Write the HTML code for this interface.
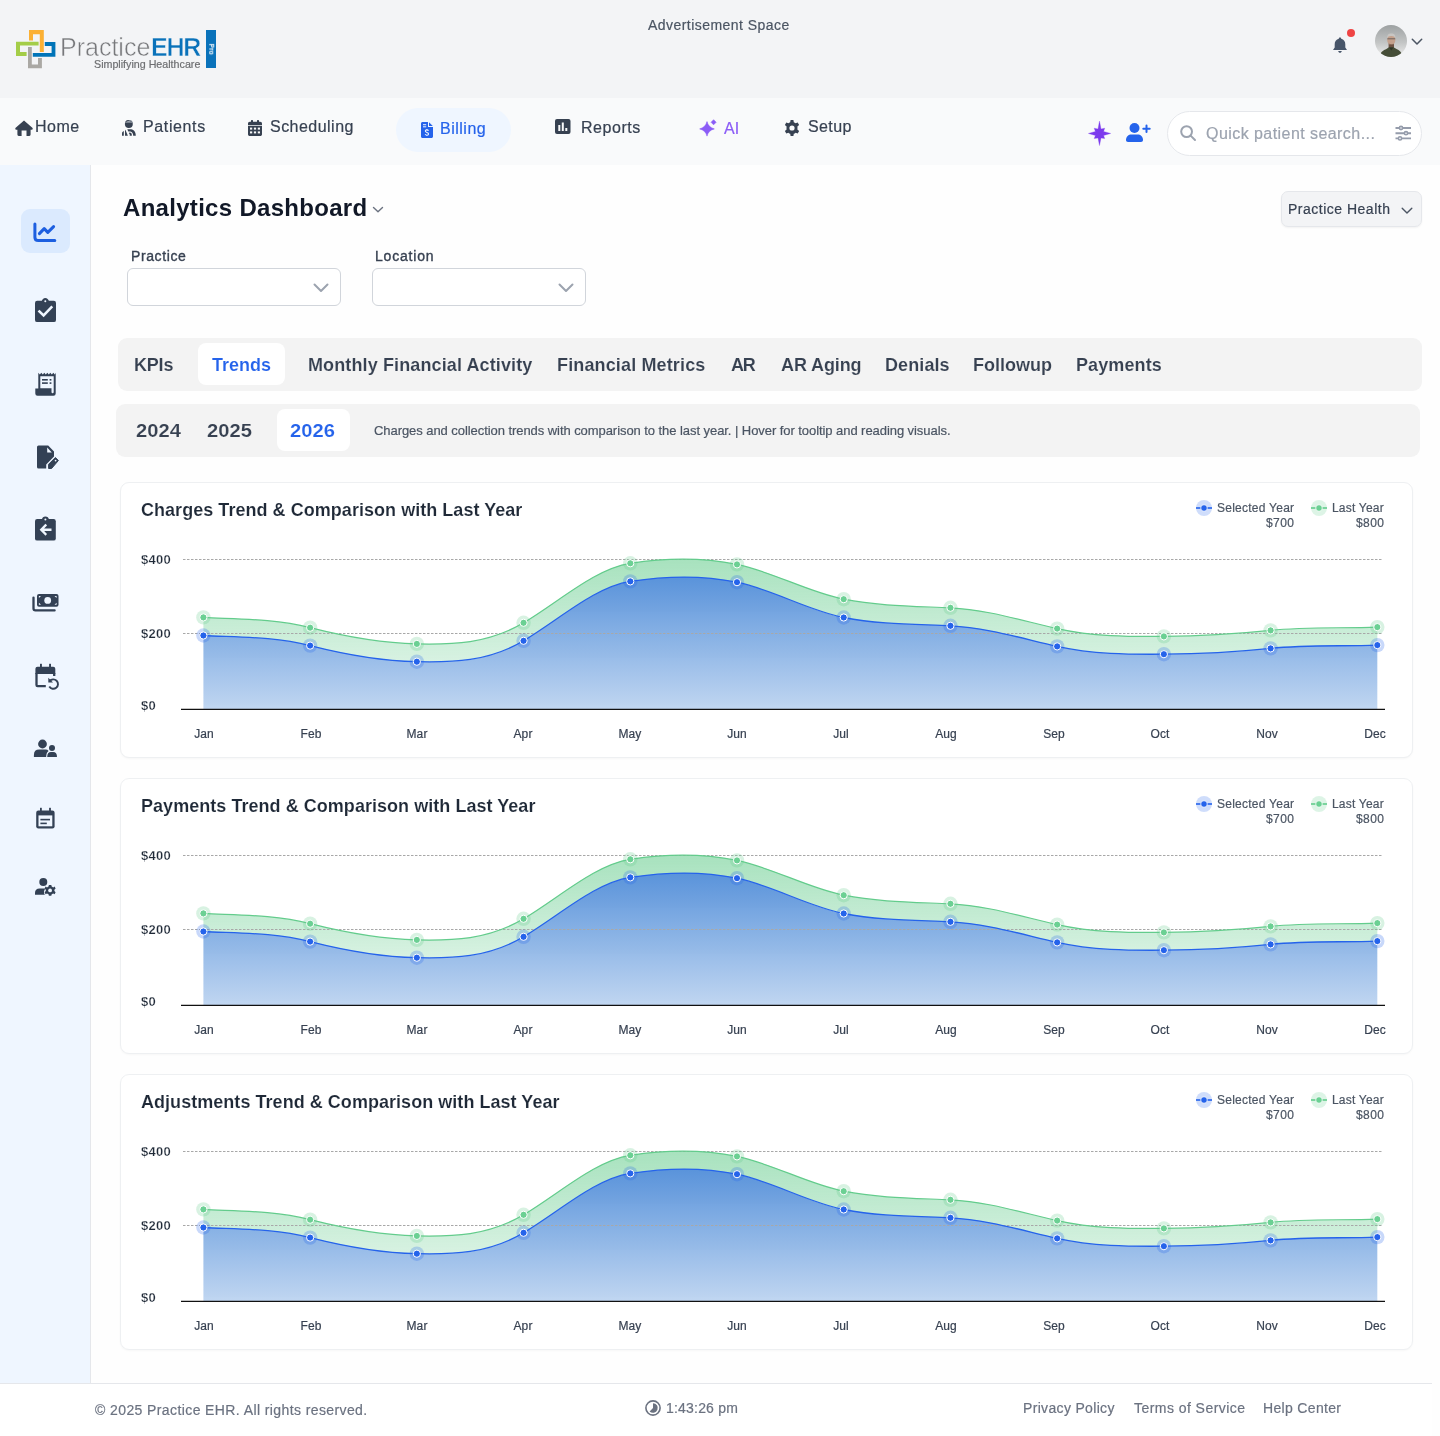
<!DOCTYPE html>
<html><head><meta charset="utf-8"><title>Analytics Dashboard</title>
<style>
html,body{margin:0;padding:0;}
body{width:1440px;height:1436px;position:relative;overflow:hidden;background:#fefefe;font-family:"Liberation Sans",sans-serif;}
.t{position:absolute;line-height:1;white-space:nowrap;will-change:transform;}
.r{position:absolute;}
svg.r{overflow:visible;}
</style></head><body>
<div class="r" style="left:0px;top:0px;width:1440px;height:98px;background:#f3f4f6"></div>
<div class="r" style="left:0px;top:98px;width:1440px;height:67px;background:#f9fafb"></div>
<div class="r" style="left:0px;top:165px;width:90px;height:1218px;background:#eff6ff;border-right:1px solid #e5e7eb"></div>
<div class="r" style="left:0px;top:1383px;width:1432px;height:53px;background:#ffffff;border-top:1px solid #e5e7eb;box-sizing:border-box"></div>
<div class="t" style="left:648.00px;top:18.15px;font-size:14px;color:#4b5563;font-weight:400;letter-spacing:0.45px;-webkit-text-stroke-width:0.2px;">Advertisement Space</div>
<svg class="r" style="left:0px;top:0px" width="60" height="72" viewBox="0 0 60 72">
<polygon fill="#fbb034" points="29,30 43.8,30 43.8,51.9 39.8,51.9 39.8,34.2 33,34.2 33,40.6 29,40.6"/>
<polygon fill="#a4cd48" points="16,41.8 38.6,41.8 38.6,45.6 20,45.6 20,51.9 26.6,51.9 26.6,55.9 16,55.9"/>
<polygon fill="#0074b8" points="44.8,42.1 55.4,42.1 55.4,56.7 32.8,56.7 32.8,52.9 51.6,52.9 51.6,46 44.8,46"/>
<polygon fill="#aaa8a4" points="28,47 31.8,47 31.8,64.5 38,64.5 38,58.1 41.9,58.1 41.9,68.2 28,68.2"/>
</svg>
<div class="t" style="left:59.50px;top:34.93px;font-size:25px;color:#77787b;font-weight:400;letter-spacing:0px;-webkit-text-stroke:0.5px #f3f4f6;">Practice</div>
<div class="t" style="left:151.30px;top:34.93px;font-size:25px;color:#0a72ba;font-weight:700;letter-spacing:-1.2px;-webkit-text-stroke:0.5px #f3f4f6;">EHR</div>
<div class="t" style="left:93.80px;top:59.24px;font-size:10.7px;color:#6d6e71;font-weight:400;letter-spacing:0px;-webkit-text-stroke-width:0.2px;">Simplifying Healthcare</div>
<div class="r" style="left:206px;top:30px;width:10px;height:38px;background:#0a72ba"></div>
<div class="t" style="left:203px;top:46px;width:16px;text-align:center;font-size:6.5px;color:#fff;font-weight:700;transform:rotate(90deg);">Pro</div>
<svg class="r" style="left:1333px;top:37px" width="14" height="16" viewBox="0 0 14 16"><path fill="#475569" d="M7,0.5 C7.8,0.5 8.2,1 8.2,1.8 C10.8,2.4 12.3,4.6 12.3,7.2 L12.3,10.4 L14,12.9 L0,12.9 L1.7,10.4 L1.7,7.2 C1.7,4.6 3.2,2.4 5.8,1.8 C5.8,1 6.2,0.5 7,0.5 Z M5.2,14 L8.8,14 C8.6,15.2 7.9,15.8 7,15.8 C6.1,15.8 5.4,15.2 5.2,14 Z"/></svg>
<svg class="r" style="left:1347px;top:29px" width="8" height="8" viewBox="0 0 8 8"><circle cx="4" cy="4" r="4" fill="#ef4444"/></svg>
<svg class="r" style="left:1375px;top:25px" width="32" height="32" viewBox="0 0 32 32"><defs><linearGradient id="avl" x1="0" y1="0" x2="0" y2="1"><stop offset="0" stop-color="#9da1a2"/><stop offset="0.55" stop-color="#c3c5c5"/><stop offset="1" stop-color="#eeeeee"/></linearGradient>
<clipPath id="avc"><circle cx="16" cy="16" r="16"/></clipPath></defs>
<g clip-path="url(#avc)"><rect width="32" height="32" fill="url(#avl)"/>
<rect x="13.6" y="18" width="5.4" height="5" fill="#6d5243"/>
<path d="M4.5,33 C5,28 7,26 11,24.3 L14,22.2 L18.5,22.2 L22,24.3 C25.5,26 27,28 27.5,33 Z" fill="#454d37"/>
<path d="M14,22.4 L16.3,25.5 L18.4,22.4 Z" fill="#2f3526"/>
<ellipse cx="16.3" cy="14.8" rx="4.1" ry="5.3" fill="#c4a08c"/>
<path d="M12.2,13.6 C12,9.8 13.6,8.6 16.3,8.6 C19,8.6 20.6,9.8 20.4,13.6 C20,11.6 18.5,10.9 16.3,10.9 C14.1,10.9 12.6,11.6 12.2,13.6 Z" fill="#c8c6c3"/>
<path d="M12.4,13.8 L20.2,13.8" stroke="#4a4a48" stroke-width="0.7"/>
<path d="M14.3,19.2 C15.3,19.8 17.3,19.8 18.3,19.2" stroke="#6d5243" stroke-width="0.8" fill="none"/>
</g></svg>
<svg class="r" style="left:1411px;top:37px" width="12" height="8" viewBox="0 0 12 8"><path d="M1.3,2.2 L6,7 L10.7,2.2" fill="none" stroke="#4b5563" stroke-width="1.5" stroke-linecap="round" stroke-linejoin="round"/></svg>
<div class="r" style="left:396px;top:108px;width:115px;height:44px;background:#eff6ff;border-radius:22px"></div>
<svg class="r" style="left:15px;top:120px" width="18" height="16" viewBox="0 0 18 16"><path fill="#374151" d="M9,0.4 L17.6,8.1 Q18.3,9.7 16.8,9.7 L15.6,9.7 L15.6,14.6 Q15.6,15.9 14.3,15.9 L11.5,15.9 L11.5,10.6 L6.6,10.6 L6.6,15.9 L3.7,15.9 Q2.4,15.9 2.4,14.6 L2.4,9.7 L1.2,9.7 Q-0.3,9.7 0.4,8.1 Z"/></svg>
<div class="t" style="left:35.20px;top:119.35px;font-size:16px;color:#374151;font-weight:400;letter-spacing:0.5px;-webkit-text-stroke-width:0.2px;">Home</div>
<svg class="r" style="left:122px;top:120px" width="14" height="16" viewBox="0 0 14 16"><defs><clipPath id="dh"><circle cx="6.85" cy="4" r="3.95"/></clipPath></defs>
<circle cx="6.85" cy="4" r="3.95" fill="#374151"/>
<g clip-path="url(#dh)"><rect x="2" y="0" width="10" height="2.7" fill="#9aa1ab"/><path d="M3.8,1.6 C4.8,0.6 6.2,0.3 7.4,0.6 M8.6,1.6 L9.4,1.4" stroke="#374151" stroke-width="1"/></g>
<g fill="#374151"><path d="M0,15.8 L0,13.2 C0,12.3 0.7,11.6 1.8,11.1 L1.8,15.8 Z"/>
<path d="M3,15.8 L3,10.3 L3.4,9.8 L5.9,15.8 Z"/>
<path d="M5.3,9.3 L9.2,9.3 C12,9.6 13.8,12.2 13.8,15.8 L11.2,15.8 C11.2,13.6 10.3,12 8.2,11.6 L6.3,11.6 Z"/>
<path d="M7.3,12.5 C8.7,12.3 9.8,13.2 9.8,14.6 L9.8,15.8 L7.7,15.8 L7.7,14.6 C7.7,14.1 7.3,13.7 6.8,13.6 Z"/></g></svg>
<div class="t" style="left:143.30px;top:119.45px;font-size:16px;color:#374151;font-weight:400;letter-spacing:0.62px;-webkit-text-stroke-width:0.2px;">Patients</div>
<svg class="r" style="left:248px;top:120px" width="14" height="16" viewBox="0 0 14 16"><rect x="3" y="0" width="2" height="3" rx="0.6" fill="#374151"/><rect x="9" y="0" width="2" height="3" rx="0.6" fill="#374151"/>
<path d="M0,3.6 C0,2.6 0.8,1.8 1.8,1.8 L12.2,1.8 C13.2,1.8 14,2.6 14,3.6 L14,5.2 L0,5.2 Z" fill="#374151"/>
<path d="M0,6 L14,6 L14,14.2 C14,15.2 13.2,16 12.2,16 L1.8,16 C0.8,16 0,15.2 0,14.2 Z" fill="#374151"/>
<g fill="#f9fafb"><rect x="2" y="7.6" width="2.2" height="2"/><rect x="5.9" y="7.6" width="2.2" height="2"/><rect x="9.8" y="7.6" width="2.2" height="2"/><rect x="2" y="11.4" width="2.2" height="2"/><rect x="5.9" y="11.4" width="2.2" height="2"/><rect x="9.8" y="11.4" width="2.2" height="2"/></g></svg>
<div class="t" style="left:269.70px;top:119.35px;font-size:16px;color:#374151;font-weight:400;letter-spacing:0.47px;-webkit-text-stroke-width:0.2px;">Scheduling</div>
<svg class="r" style="left:421px;top:122px" width="12" height="16" viewBox="0 0 12 16"><path fill="#2563eb" d="M1.5,0 L7,0 L7,5 L12,5 L12,14.5 C12,15.3 11.3,16 10.5,16 L1.5,16 C0.7,16 0,15.3 0,14.5 L0,1.5 C0,0.7 0.7,0 1.5,0 Z M8,0.2 L11.8,4 L8,4 Z"/>
<g fill="#eff6ff"><rect x="2" y="2.2" width="3.2" height="1"/><rect x="2" y="4.3" width="3.2" height="1"/></g>
<path d="M7.5,8.7 C7.2,8.1 6.6,7.9 5.9,7.9 C4.9,7.9 4.3,8.4 4.3,9.1 C4.3,10.8 7.6,10 7.6,12 C7.6,12.8 6.9,13.2 5.9,13.2 C5.1,13.2 4.5,12.9 4.1,12.3 M5.9,7 L5.9,7.9 M5.9,13.2 L5.9,14.1" fill="none" stroke="#eff6ff" stroke-width="1.1"/></svg>
<div class="t" style="left:440.40px;top:120.95px;font-size:16px;color:#2563eb;font-weight:400;letter-spacing:0.5px;-webkit-text-stroke-width:0.2px;">Billing</div>
<svg class="r" style="left:555px;top:118.8px" width="16" height="15" viewBox="0 0 16 15"><rect x="0" y="0" width="15.5" height="15" rx="2" fill="#374151"/><g fill="#f9fafb"><rect x="3.3" y="6" width="2" height="6"/><rect x="6.8" y="3.5" width="2" height="8.5"/><rect x="10.3" y="9" width="2" height="3"/></g></svg>
<div class="t" style="left:580.60px;top:119.85px;font-size:16px;color:#374151;font-weight:400;letter-spacing:0.55px;-webkit-text-stroke-width:0.2px;">Reports</div>
<svg class="r" style="left:0;top:0" width="760" height="160"><path fill="#8b5cf6" d="M707,121.6 Q708.3,127.4 714.3,128.9 Q708.3,130.4 707,136.1 Q705.7,130.4 699.7,128.9 Q705.7,127.4 707,121.6 Z M713.6,119.7 L716.1,122.3 L713.6,124.8 L711.1,122.3 Z" stroke="#8b5cf6" stroke-width="0.6" stroke-linejoin="round"/></svg>
<div class="t" style="left:724.20px;top:121.15px;font-size:16px;color:#8b5cf6;font-weight:400;letter-spacing:0px;-webkit-text-stroke-width:0.2px;">AI</div>
<svg class="r" style="left:784px;top:120px" width="16" height="16" viewBox="0 0 16 16"><path fill="#374151" fill-rule="evenodd" d="M6.6,0 L9.4,0 L9.8,2.2 C10.5,2.5 11.1,2.8 11.6,3.3 L13.7,2.5 L15.1,4.9 L13.4,6.4 C13.5,7.1 13.5,8.9 13.4,9.6 L15.1,11.1 L13.7,13.5 L11.6,12.7 C11.1,13.2 10.5,13.5 9.8,13.8 L9.4,16 L6.6,16 L6.2,13.8 C5.5,13.5 4.9,13.2 4.4,12.7 L2.3,13.5 L0.9,11.1 L2.6,9.6 C2.5,8.9 2.5,7.1 2.6,6.4 L0.9,4.9 L2.3,2.5 L4.4,3.3 C4.9,2.8 5.5,2.5 6.2,2.2 Z M8,5.4 A2.6,2.6 0 1 0 8,10.6 A2.6,2.6 0 1 0 8,5.4 Z"/></svg>
<div class="t" style="left:807.60px;top:119.15px;font-size:16px;color:#374151;font-weight:400;letter-spacing:0.4px;-webkit-text-stroke-width:0.2px;">Setup</div>
<svg class="r" style="left:0;top:0" width="1440" height="200"><polygon fill="#7c3aed" stroke="#7c3aed" stroke-width="0.3" stroke-linejoin="round" points="1099.50,121.10 1101.00,128.95 1104.70,128.20 1103.60,131.45 1110.70,133.45 1103.60,135.45 1104.70,138.60 1101.00,137.95 1099.50,145.60 1098.00,137.95 1094.20,138.60 1095.40,135.45 1088.40,133.45 1095.40,131.45 1094.20,128.20 1098.00,128.95"/></svg>
<svg class="r" style="left:1126px;top:123px" width="24" height="19" viewBox="0 0 24 19"><circle cx="8.5" cy="5" r="5" fill="#2563eb"/><path fill="#2563eb" d="M0,17 C0,13.5 2.5,11.5 5.5,11.5 L11.5,11.5 C14.5,11.5 17,13.5 17,17 C17,18.2 16.2,19 15,19 L2,19 C0.8,19 0,18.2 0,17 Z"/>
<path d="M20.5,2.5 L20.5,9 M17.3,5.8 L23.7,5.8" stroke="#2563eb" stroke-width="2" stroke-linecap="round"/></svg>
<div class="r" style="left:1166.5px;top:110.5px;width:255px;height:45px;background:#fff;border:1px solid #e5e7eb;border-radius:23px;box-sizing:border-box"></div>
<svg class="r" style="left:1180px;top:125px" width="16" height="16" viewBox="0 0 16 16"><circle cx="6.6" cy="6.6" r="5.4" fill="none" stroke="#9ca3af" stroke-width="2"/><path d="M10.6,10.6 L15,15" stroke="#9ca3af" stroke-width="2" stroke-linecap="round"/></svg>
<div class="t" style="left:1206.40px;top:125.65px;font-size:16px;color:#9ca3af;font-weight:400;letter-spacing:0.44px;-webkit-text-stroke-width:0.2px;">Quick patient search...</div>
<svg class="r" style="left:1395px;top:126px" width="16" height="14" viewBox="0 0 16 14"><g stroke="#959cab" stroke-width="1.9" fill="none"><path d="M0.5,2 L16,2 M0.5,7.2 L16,7.2 M0.5,12.4 L16,12.4"/></g>
<g fill="#fff" stroke="#959cab" stroke-width="1.6"><circle cx="6" cy="2" r="1.6"/><circle cx="11" cy="7.2" r="1.6"/><circle cx="5" cy="12.4" r="1.6"/></g></svg>
<div class="t" style="left:123.20px;top:196.28px;font-size:24px;color:#111827;font-weight:700;letter-spacing:0.3px;">Analytics Dashboard</div>
<svg class="r" style="left:372px;top:206px" width="12" height="8" viewBox="0 0 12 8"><path d="M1.5,1.5 L6,5.8 L10.5,1.5" fill="none" stroke="#6b7280" stroke-width="1.4" stroke-linecap="round" stroke-linejoin="round"/></svg>
<div class="r" style="left:1281px;top:191px;width:141px;height:35.5px;background:#f3f4f6;border:1px solid #e5e7eb;border-radius:7px;box-sizing:border-box;box-shadow:0 1px 2px rgba(0,0,0,0.05)"></div>
<div class="t" style="left:1288.40px;top:202.35px;font-size:14px;color:#374151;font-weight:400;letter-spacing:0.5px;-webkit-text-stroke-width:0.2px;">Practice Health</div>
<svg class="r" style="left:1401px;top:207px" width="12" height="8" viewBox="0 0 12 8"><path d="M1.2,1.2 L6,6 L10.8,1.2" fill="none" stroke="#4b5563" stroke-width="1.4" stroke-linecap="round" stroke-linejoin="round"/></svg>
<div class="t" style="left:130.80px;top:248.95px;font-size:14px;color:#374151;font-weight:400;letter-spacing:0.6px;-webkit-text-stroke:0.35px #374151;">Practice</div>
<div class="r" style="left:127px;top:268px;width:214px;height:38px;background:#fff;border:1px solid #d1d5db;border-radius:6px;box-sizing:border-box"></div>
<svg class="r" style="left:313px;top:283px" width="16" height="10" viewBox="0 0 16 10"><path d="M1.5,1.5 L8,8 L14.5,1.5" fill="none" stroke="#9ca3af" stroke-width="2" stroke-linecap="round" stroke-linejoin="round"/></svg>
<div class="t" style="left:375.40px;top:249.35px;font-size:14px;color:#374151;font-weight:400;letter-spacing:0.8px;-webkit-text-stroke:0.35px #374151;">Location</div>
<div class="r" style="left:372px;top:268px;width:214px;height:38px;background:#fff;border:1px solid #d1d5db;border-radius:6px;box-sizing:border-box"></div>
<svg class="r" style="left:558px;top:283px" width="16" height="10" viewBox="0 0 16 10"><path d="M1.5,1.5 L8,8 L14.5,1.5" fill="none" stroke="#9ca3af" stroke-width="2" stroke-linecap="round" stroke-linejoin="round"/></svg>
<div class="r" style="left:118px;top:338px;width:1304px;height:53px;background:#f3f3f3;border-radius:9px"></div>
<div class="r" style="left:198px;top:343px;width:87px;height:42px;background:#fff;border-radius:8px"></div>
<div class="t" style="left:134.20px;top:355.86px;font-size:18px;color:#374151;font-weight:700;letter-spacing:-0.2px;-webkit-text-stroke:0.12px #f3f3f3;">KPIs</div>
<div class="t" style="left:211.60px;top:355.86px;font-size:18px;color:#2563eb;font-weight:700;letter-spacing:0px;-webkit-text-stroke:0.12px #ffffff;">Trends</div>
<div class="t" style="left:308.20px;top:355.86px;font-size:18px;color:#374151;font-weight:700;letter-spacing:0.12px;-webkit-text-stroke:0.12px #f3f3f3;">Monthly Financial Activity</div>
<div class="t" style="left:557.40px;top:355.86px;font-size:18px;color:#374151;font-weight:700;letter-spacing:0.14px;-webkit-text-stroke:0.12px #f3f3f3;">Financial Metrics</div>
<div class="t" style="left:731.30px;top:355.86px;font-size:18px;color:#374151;font-weight:700;letter-spacing:-1.2px;-webkit-text-stroke:0.12px #f3f3f3;">AR</div>
<div class="t" style="left:780.60px;top:355.86px;font-size:18px;color:#374151;font-weight:700;letter-spacing:-0.1px;-webkit-text-stroke:0.12px #f3f3f3;">AR Aging</div>
<div class="t" style="left:884.60px;top:355.86px;font-size:18px;color:#374151;font-weight:700;letter-spacing:0.1px;-webkit-text-stroke:0.12px #f3f3f3;">Denials</div>
<div class="t" style="left:972.90px;top:355.86px;font-size:18px;color:#374151;font-weight:700;letter-spacing:0px;-webkit-text-stroke:0.12px #f3f3f3;">Followup</div>
<div class="t" style="left:1076.00px;top:355.86px;font-size:18px;color:#374151;font-weight:700;letter-spacing:0.1px;-webkit-text-stroke:0.12px #f3f3f3;">Payments</div>
<div class="r" style="left:116px;top:404px;width:1304px;height:53px;background:#f3f3f3;border-radius:9px"></div>
<div class="r" style="left:277px;top:409px;width:73px;height:42px;background:#fff;border-radius:8px"></div>
<div class="t" style="left:136.30px;top:421.86px;font-size:18px;color:#374151;font-weight:700;letter-spacing:0px;transform:scaleX(1.12);transform-origin:0 0;-webkit-text-stroke:0.12px #f3f3f3;">2024</div>
<div class="t" style="left:207.10px;top:421.86px;font-size:18px;color:#374151;font-weight:700;letter-spacing:0px;transform:scaleX(1.12);transform-origin:0 0;-webkit-text-stroke:0.12px #f3f3f3;">2025</div>
<div class="t" style="left:290.20px;top:421.86px;font-size:18px;color:#2563eb;font-weight:700;letter-spacing:0px;transform:scaleX(1.12);transform-origin:0 0;-webkit-text-stroke:0.12px #ffffff;">2026</div>
<div class="t" style="left:374.30px;top:423.79px;font-size:13px;color:#4b5563;font-weight:400;letter-spacing:-0.062px;-webkit-text-stroke:0.2px #4b5563;">Charges and collection trends with comparison to the last year. | Hover for tooltip and reading visuals.</div>
<div class="t" style="left:95.40px;top:1403.35px;font-size:14px;color:#6b7280;font-weight:400;letter-spacing:0.4px;-webkit-text-stroke-width:0.2px;">© 2025 Practice EHR. All rights reserved.</div>
<svg class="r" style="left:644.6px;top:1399.7px" width="16" height="16" viewBox="0 0 16 16"><circle cx="8" cy="8" r="7.1" fill="none" stroke="#6b7280" stroke-width="1.6"/><path d="M8,8 L8,3.2 A4.8,4.8 0 1 1 4.6,11.4 Z" fill="#6b7280"/></svg>
<div class="t" style="left:666.30px;top:1400.85px;font-size:14px;color:#6b7280;font-weight:400;letter-spacing:0.2px;-webkit-text-stroke-width:0.2px;">1:43:26 pm</div>
<div class="t" style="left:1023.00px;top:1401.25px;font-size:14px;color:#6b7280;font-weight:400;letter-spacing:0.33px;-webkit-text-stroke-width:0.2px;">Privacy Policy</div>
<div class="t" style="left:1134.20px;top:1401.25px;font-size:14px;color:#6b7280;font-weight:400;letter-spacing:0.45px;-webkit-text-stroke-width:0.2px;">Terms of Service</div>
<div class="t" style="left:1263.20px;top:1401.25px;font-size:14px;color:#6b7280;font-weight:400;letter-spacing:0.33px;-webkit-text-stroke-width:0.2px;">Help Center</div>
<div class="r" style="left:120px;top:482px;width:1293px;height:276px;background:#fff;border:1px solid #eef0f2;border-radius:9px;box-sizing:border-box;box-shadow:0 1px 2px rgba(16,24,40,0.03)"></div>
<div class="t" style="left:141.40px;top:500.66px;font-size:18px;color:#1f2937;font-weight:700;letter-spacing:0.04px;-webkit-text-stroke:0.12px #ffffff;">Charges Trend &amp; Comparison with Last Year</div>
<svg class="r" style="left:0;top:0" width="1440" height="1436"><defs>
<linearGradient id="gb0" x1="0" y1="0" x2="0" y2="1"><stop offset="0" stop-color="rgb(60,128,212)" stop-opacity="0.85"/><stop offset="1" stop-color="rgb(60,128,212)" stop-opacity="0.32"/></linearGradient>
<linearGradient id="gg0" x1="0" y1="0" x2="0" y2="1"><stop offset="0" stop-color="rgb(60,190,110)" stop-opacity="0.45"/><stop offset="1" stop-color="rgb(60,190,110)" stop-opacity="0.2"/></linearGradient>
</defs>
<g transform="translate(0,0)">
<path d="M203.40,617.40C238.97,619.22,274.55,618.65,310.12,627.70C345.69,636.75,381.27,643.14,416.84,643.90C452.41,644.66,487.99,643.94,523.56,622.80C559.13,601.66,594.71,568.79,630.28,563.30C665.85,557.81,701.43,557.08,737.00,564.40C772.57,571.72,808.15,592.17,843.72,599.20C879.29,606.23,914.87,606.19,950.44,607.80C986.01,609.41,1021.59,620.57,1057.16,628.60C1092.73,636.63,1128.31,636.65,1163.88,636.40C1199.45,636.15,1235.03,634.10,1270.60,630.40C1306.17,626.70,1341.75,628.42,1377.32,627.10L1377.32,645.10C1341.75,646.42,1306.17,644.70,1270.60,648.40C1235.03,652.10,1199.45,653.95,1163.88,654.20C1128.31,654.45,1092.73,654.43,1057.16,646.40C1021.59,638.37,986.01,627.41,950.44,625.80C914.87,624.19,879.29,624.53,843.72,617.50C808.15,610.47,772.57,589.52,737.00,582.20C701.43,574.88,665.85,575.91,630.28,581.40C594.71,586.89,559.13,619.66,523.56,640.80C487.99,661.94,452.41,662.46,416.84,661.70C381.27,660.94,345.69,654.65,310.12,645.60C274.55,636.55,238.97,637.32,203.40,635.50Z" fill="url(#gg0)"/>
<path d="M203.40,635.50C238.97,637.32,274.55,636.55,310.12,645.60C345.69,654.65,381.27,660.94,416.84,661.70C452.41,662.46,487.99,661.94,523.56,640.80C559.13,619.66,594.71,586.89,630.28,581.40C665.85,575.91,701.43,574.88,737.00,582.20C772.57,589.52,808.15,610.47,843.72,617.50C879.29,624.53,914.87,624.19,950.44,625.80C986.01,627.41,1021.59,638.37,1057.16,646.40C1092.73,654.43,1128.31,654.45,1163.88,654.20C1199.45,653.95,1235.03,652.10,1270.60,648.40C1306.17,644.70,1341.75,646.42,1377.32,645.10L1377.32,709.3L203.40,709.3Z" fill="url(#gb0)"/>
<path d="M183,559.5 L1383,559.5 M183,633.5 L1383,633.5" stroke="#a8a8a8" stroke-width="1" stroke-dasharray="2.5 1.5"/>
<path d="M181,709.3 L1385,709.3" stroke="#111" stroke-width="1.3"/>
<path d="M203.40,617.40C238.97,619.22,274.55,618.65,310.12,627.70C345.69,636.75,381.27,643.14,416.84,643.90C452.41,644.66,487.99,643.94,523.56,622.80C559.13,601.66,594.71,568.79,630.28,563.30C665.85,557.81,701.43,557.08,737.00,564.40C772.57,571.72,808.15,592.17,843.72,599.20C879.29,606.23,914.87,606.19,950.44,607.80C986.01,609.41,1021.59,620.57,1057.16,628.60C1092.73,636.63,1128.31,636.65,1163.88,636.40C1199.45,636.15,1235.03,634.10,1270.60,630.40C1306.17,626.70,1341.75,628.42,1377.32,627.10" fill="none" stroke="#63cc8c" stroke-width="1.2"/>
<path d="M203.40,635.50C238.97,637.32,274.55,636.55,310.12,645.60C345.69,654.65,381.27,660.94,416.84,661.70C452.41,662.46,487.99,661.94,523.56,640.80C559.13,619.66,594.71,586.89,630.28,581.40C665.85,575.91,701.43,574.88,737.00,582.20C772.57,589.52,808.15,610.47,843.72,617.50C879.29,624.53,914.87,624.19,950.44,625.80C986.01,627.41,1021.59,638.37,1057.16,646.40C1092.73,654.43,1128.31,654.45,1163.88,654.20C1199.45,653.95,1235.03,652.10,1270.60,648.40C1306.17,644.70,1341.75,646.42,1377.32,645.10" fill="none" stroke="#2563eb" stroke-width="1.3"/>
<circle cx="203.40" cy="617.4" r="7.2" fill="rgba(99,204,140,0.25)"/><circle cx="203.40" cy="617.4" r="3.6" fill="#6bd093" stroke="#fff" stroke-width="1"/><circle cx="203.40" cy="635.5" r="7.2" fill="rgba(37,99,235,0.25)"/><circle cx="203.40" cy="635.5" r="3.6" fill="#2563eb" stroke="#fff" stroke-width="1"/><circle cx="310.12" cy="627.7" r="7.2" fill="rgba(99,204,140,0.25)"/><circle cx="310.12" cy="627.7" r="3.6" fill="#6bd093" stroke="#fff" stroke-width="1"/><circle cx="310.12" cy="645.6" r="7.2" fill="rgba(37,99,235,0.25)"/><circle cx="310.12" cy="645.6" r="3.6" fill="#2563eb" stroke="#fff" stroke-width="1"/><circle cx="416.84" cy="643.9" r="7.2" fill="rgba(99,204,140,0.25)"/><circle cx="416.84" cy="643.9" r="3.6" fill="#6bd093" stroke="#fff" stroke-width="1"/><circle cx="416.84" cy="661.7" r="7.2" fill="rgba(37,99,235,0.25)"/><circle cx="416.84" cy="661.7" r="3.6" fill="#2563eb" stroke="#fff" stroke-width="1"/><circle cx="523.56" cy="622.8" r="7.2" fill="rgba(99,204,140,0.25)"/><circle cx="523.56" cy="622.8" r="3.6" fill="#6bd093" stroke="#fff" stroke-width="1"/><circle cx="523.56" cy="640.8" r="7.2" fill="rgba(37,99,235,0.25)"/><circle cx="523.56" cy="640.8" r="3.6" fill="#2563eb" stroke="#fff" stroke-width="1"/><circle cx="630.28" cy="563.3" r="7.2" fill="rgba(99,204,140,0.25)"/><circle cx="630.28" cy="563.3" r="3.6" fill="#6bd093" stroke="#fff" stroke-width="1"/><circle cx="630.28" cy="581.4" r="7.2" fill="rgba(37,99,235,0.25)"/><circle cx="630.28" cy="581.4" r="3.6" fill="#2563eb" stroke="#fff" stroke-width="1"/><circle cx="737.00" cy="564.4" r="7.2" fill="rgba(99,204,140,0.25)"/><circle cx="737.00" cy="564.4" r="3.6" fill="#6bd093" stroke="#fff" stroke-width="1"/><circle cx="737.00" cy="582.2" r="7.2" fill="rgba(37,99,235,0.25)"/><circle cx="737.00" cy="582.2" r="3.6" fill="#2563eb" stroke="#fff" stroke-width="1"/><circle cx="843.72" cy="599.2" r="7.2" fill="rgba(99,204,140,0.25)"/><circle cx="843.72" cy="599.2" r="3.6" fill="#6bd093" stroke="#fff" stroke-width="1"/><circle cx="843.72" cy="617.5" r="7.2" fill="rgba(37,99,235,0.25)"/><circle cx="843.72" cy="617.5" r="3.6" fill="#2563eb" stroke="#fff" stroke-width="1"/><circle cx="950.44" cy="607.8" r="7.2" fill="rgba(99,204,140,0.25)"/><circle cx="950.44" cy="607.8" r="3.6" fill="#6bd093" stroke="#fff" stroke-width="1"/><circle cx="950.44" cy="625.8" r="7.2" fill="rgba(37,99,235,0.25)"/><circle cx="950.44" cy="625.8" r="3.6" fill="#2563eb" stroke="#fff" stroke-width="1"/><circle cx="1057.16" cy="628.6" r="7.2" fill="rgba(99,204,140,0.25)"/><circle cx="1057.16" cy="628.6" r="3.6" fill="#6bd093" stroke="#fff" stroke-width="1"/><circle cx="1057.16" cy="646.4" r="7.2" fill="rgba(37,99,235,0.25)"/><circle cx="1057.16" cy="646.4" r="3.6" fill="#2563eb" stroke="#fff" stroke-width="1"/><circle cx="1163.88" cy="636.4" r="7.2" fill="rgba(99,204,140,0.25)"/><circle cx="1163.88" cy="636.4" r="3.6" fill="#6bd093" stroke="#fff" stroke-width="1"/><circle cx="1163.88" cy="654.2" r="7.2" fill="rgba(37,99,235,0.25)"/><circle cx="1163.88" cy="654.2" r="3.6" fill="#2563eb" stroke="#fff" stroke-width="1"/><circle cx="1270.60" cy="630.4" r="7.2" fill="rgba(99,204,140,0.25)"/><circle cx="1270.60" cy="630.4" r="3.6" fill="#6bd093" stroke="#fff" stroke-width="1"/><circle cx="1270.60" cy="648.4" r="7.2" fill="rgba(37,99,235,0.25)"/><circle cx="1270.60" cy="648.4" r="3.6" fill="#2563eb" stroke="#fff" stroke-width="1"/><circle cx="1377.32" cy="627.1" r="7.2" fill="rgba(99,204,140,0.25)"/><circle cx="1377.32" cy="627.1" r="3.6" fill="#6bd093" stroke="#fff" stroke-width="1"/><circle cx="1377.32" cy="645.1" r="7.2" fill="rgba(37,99,235,0.25)"/><circle cx="1377.32" cy="645.1" r="3.6" fill="#2563eb" stroke="#fff" stroke-width="1"/></g></svg>
<div class="t" style="left:140.60px;top:552.79px;font-size:13px;color:#1f2937;font-weight:700;letter-spacing:0.3px;-webkit-text-stroke:0.25px #ffffff;">$400</div>
<div class="t" style="left:140.60px;top:626.59px;font-size:13px;color:#1f2937;font-weight:700;letter-spacing:0.3px;-webkit-text-stroke:0.25px #ffffff;">$200</div>
<div class="t" style="left:140.60px;top:698.99px;font-size:13px;color:#1f2937;font-weight:700;letter-spacing:0.3px;-webkit-text-stroke:0.25px #ffffff;">$0</div>
<div class="t" style="left:104.20px;width:200px;text-align:center;top:727.74px;font-size:12px;color:#374151;font-weight:400;letter-spacing:0.1px;-webkit-text-stroke-width:0.2px;">Jan</div>
<div class="t" style="left:210.50px;width:200px;text-align:center;top:727.74px;font-size:12px;color:#374151;font-weight:400;letter-spacing:0.1px;-webkit-text-stroke-width:0.2px;">Feb</div>
<div class="t" style="left:317.00px;width:200px;text-align:center;top:727.74px;font-size:12px;color:#374151;font-weight:400;letter-spacing:0.1px;-webkit-text-stroke-width:0.2px;">Mar</div>
<div class="t" style="left:423.00px;width:200px;text-align:center;top:727.74px;font-size:12px;color:#374151;font-weight:400;letter-spacing:0.1px;-webkit-text-stroke-width:0.2px;">Apr</div>
<div class="t" style="left:530.00px;width:200px;text-align:center;top:727.74px;font-size:12px;color:#374151;font-weight:400;letter-spacing:0.1px;-webkit-text-stroke-width:0.2px;">May</div>
<div class="t" style="left:637.00px;width:200px;text-align:center;top:727.74px;font-size:12px;color:#374151;font-weight:400;letter-spacing:0.1px;-webkit-text-stroke-width:0.2px;">Jun</div>
<div class="t" style="left:741.00px;width:200px;text-align:center;top:727.74px;font-size:12px;color:#374151;font-weight:400;letter-spacing:0.1px;-webkit-text-stroke-width:0.2px;">Jul</div>
<div class="t" style="left:846.00px;width:200px;text-align:center;top:727.74px;font-size:12px;color:#374151;font-weight:400;letter-spacing:0.1px;-webkit-text-stroke-width:0.2px;">Aug</div>
<div class="t" style="left:954.00px;width:200px;text-align:center;top:727.74px;font-size:12px;color:#374151;font-weight:400;letter-spacing:0.1px;-webkit-text-stroke-width:0.2px;">Sep</div>
<div class="t" style="left:1060.00px;width:200px;text-align:center;top:727.74px;font-size:12px;color:#374151;font-weight:400;letter-spacing:0.1px;-webkit-text-stroke-width:0.2px;">Oct</div>
<div class="t" style="left:1167.00px;width:200px;text-align:center;top:727.74px;font-size:12px;color:#374151;font-weight:400;letter-spacing:0.1px;-webkit-text-stroke-width:0.2px;">Nov</div>
<div class="t" style="left:1275.00px;width:200px;text-align:center;top:727.74px;font-size:12px;color:#374151;font-weight:400;letter-spacing:0.1px;-webkit-text-stroke-width:0.2px;">Dec</div>
<svg class="r" style="left:1196px;top:499.8px" width="16" height="16" viewBox="0 0 16 16"><path d="M0,8 L16,8" stroke="#2563eb" stroke-width="1.6"/><circle cx="8" cy="8" r="8" fill="rgba(37,99,235,0.22)"/><circle cx="8" cy="8" r="3.3" fill="#2563eb" stroke="#fff" stroke-width="0.8"/></svg>
<svg class="r" style="left:1310.9px;top:499.8px" width="16" height="16" viewBox="0 0 16 16"><path d="M0,8 L16,8" stroke="#63cc8c" stroke-width="1.6"/><circle cx="8" cy="8" r="8" fill="rgba(99,204,140,0.22)"/><circle cx="8" cy="8" r="3.3" fill="#6bd093" stroke="#fff" stroke-width="0.8"/></svg>
<div class="t" style="right:145.40px;top:501.64px;font-size:12px;color:#4b5563;font-weight:400;letter-spacing:0.25px;-webkit-text-stroke-width:0.2px;">Selected Year</div>
<div class="t" style="right:145.40px;top:517.24px;font-size:12px;color:#4b5563;font-weight:400;letter-spacing:0.4px;-webkit-text-stroke-width:0.2px;">$700</div>
<div class="t" style="right:56.20px;top:501.64px;font-size:12px;color:#4b5563;font-weight:400;letter-spacing:0.2px;-webkit-text-stroke-width:0.2px;">Last Year</div>
<div class="t" style="right:56.20px;top:517.24px;font-size:12px;color:#4b5563;font-weight:400;letter-spacing:0.4px;-webkit-text-stroke-width:0.2px;">$800</div>
<div class="r" style="left:120px;top:778px;width:1293px;height:276px;background:#fff;border:1px solid #eef0f2;border-radius:9px;box-sizing:border-box;box-shadow:0 1px 2px rgba(16,24,40,0.03)"></div>
<div class="t" style="left:141.40px;top:796.66px;font-size:18px;color:#1f2937;font-weight:700;letter-spacing:0.04px;-webkit-text-stroke:0.12px #ffffff;">Payments Trend &amp; Comparison with Last Year</div>
<svg class="r" style="left:0;top:0" width="1440" height="1436"><defs>
<linearGradient id="gb1" x1="0" y1="0" x2="0" y2="1"><stop offset="0" stop-color="rgb(60,128,212)" stop-opacity="0.85"/><stop offset="1" stop-color="rgb(60,128,212)" stop-opacity="0.32"/></linearGradient>
<linearGradient id="gg1" x1="0" y1="0" x2="0" y2="1"><stop offset="0" stop-color="rgb(60,190,110)" stop-opacity="0.45"/><stop offset="1" stop-color="rgb(60,190,110)" stop-opacity="0.2"/></linearGradient>
</defs>
<g transform="translate(0,296)">
<path d="M203.40,617.40C238.97,619.22,274.55,618.65,310.12,627.70C345.69,636.75,381.27,643.14,416.84,643.90C452.41,644.66,487.99,643.94,523.56,622.80C559.13,601.66,594.71,568.79,630.28,563.30C665.85,557.81,701.43,557.08,737.00,564.40C772.57,571.72,808.15,592.17,843.72,599.20C879.29,606.23,914.87,606.19,950.44,607.80C986.01,609.41,1021.59,620.57,1057.16,628.60C1092.73,636.63,1128.31,636.65,1163.88,636.40C1199.45,636.15,1235.03,634.10,1270.60,630.40C1306.17,626.70,1341.75,628.42,1377.32,627.10L1377.32,645.10C1341.75,646.42,1306.17,644.70,1270.60,648.40C1235.03,652.10,1199.45,653.95,1163.88,654.20C1128.31,654.45,1092.73,654.43,1057.16,646.40C1021.59,638.37,986.01,627.41,950.44,625.80C914.87,624.19,879.29,624.53,843.72,617.50C808.15,610.47,772.57,589.52,737.00,582.20C701.43,574.88,665.85,575.91,630.28,581.40C594.71,586.89,559.13,619.66,523.56,640.80C487.99,661.94,452.41,662.46,416.84,661.70C381.27,660.94,345.69,654.65,310.12,645.60C274.55,636.55,238.97,637.32,203.40,635.50Z" fill="url(#gg1)"/>
<path d="M203.40,635.50C238.97,637.32,274.55,636.55,310.12,645.60C345.69,654.65,381.27,660.94,416.84,661.70C452.41,662.46,487.99,661.94,523.56,640.80C559.13,619.66,594.71,586.89,630.28,581.40C665.85,575.91,701.43,574.88,737.00,582.20C772.57,589.52,808.15,610.47,843.72,617.50C879.29,624.53,914.87,624.19,950.44,625.80C986.01,627.41,1021.59,638.37,1057.16,646.40C1092.73,654.43,1128.31,654.45,1163.88,654.20C1199.45,653.95,1235.03,652.10,1270.60,648.40C1306.17,644.70,1341.75,646.42,1377.32,645.10L1377.32,709.3L203.40,709.3Z" fill="url(#gb1)"/>
<path d="M183,559.5 L1383,559.5 M183,633.5 L1383,633.5" stroke="#a8a8a8" stroke-width="1" stroke-dasharray="2.5 1.5"/>
<path d="M181,709.3 L1385,709.3" stroke="#111" stroke-width="1.3"/>
<path d="M203.40,617.40C238.97,619.22,274.55,618.65,310.12,627.70C345.69,636.75,381.27,643.14,416.84,643.90C452.41,644.66,487.99,643.94,523.56,622.80C559.13,601.66,594.71,568.79,630.28,563.30C665.85,557.81,701.43,557.08,737.00,564.40C772.57,571.72,808.15,592.17,843.72,599.20C879.29,606.23,914.87,606.19,950.44,607.80C986.01,609.41,1021.59,620.57,1057.16,628.60C1092.73,636.63,1128.31,636.65,1163.88,636.40C1199.45,636.15,1235.03,634.10,1270.60,630.40C1306.17,626.70,1341.75,628.42,1377.32,627.10" fill="none" stroke="#63cc8c" stroke-width="1.2"/>
<path d="M203.40,635.50C238.97,637.32,274.55,636.55,310.12,645.60C345.69,654.65,381.27,660.94,416.84,661.70C452.41,662.46,487.99,661.94,523.56,640.80C559.13,619.66,594.71,586.89,630.28,581.40C665.85,575.91,701.43,574.88,737.00,582.20C772.57,589.52,808.15,610.47,843.72,617.50C879.29,624.53,914.87,624.19,950.44,625.80C986.01,627.41,1021.59,638.37,1057.16,646.40C1092.73,654.43,1128.31,654.45,1163.88,654.20C1199.45,653.95,1235.03,652.10,1270.60,648.40C1306.17,644.70,1341.75,646.42,1377.32,645.10" fill="none" stroke="#2563eb" stroke-width="1.3"/>
<circle cx="203.40" cy="617.4" r="7.2" fill="rgba(99,204,140,0.25)"/><circle cx="203.40" cy="617.4" r="3.6" fill="#6bd093" stroke="#fff" stroke-width="1"/><circle cx="203.40" cy="635.5" r="7.2" fill="rgba(37,99,235,0.25)"/><circle cx="203.40" cy="635.5" r="3.6" fill="#2563eb" stroke="#fff" stroke-width="1"/><circle cx="310.12" cy="627.7" r="7.2" fill="rgba(99,204,140,0.25)"/><circle cx="310.12" cy="627.7" r="3.6" fill="#6bd093" stroke="#fff" stroke-width="1"/><circle cx="310.12" cy="645.6" r="7.2" fill="rgba(37,99,235,0.25)"/><circle cx="310.12" cy="645.6" r="3.6" fill="#2563eb" stroke="#fff" stroke-width="1"/><circle cx="416.84" cy="643.9" r="7.2" fill="rgba(99,204,140,0.25)"/><circle cx="416.84" cy="643.9" r="3.6" fill="#6bd093" stroke="#fff" stroke-width="1"/><circle cx="416.84" cy="661.7" r="7.2" fill="rgba(37,99,235,0.25)"/><circle cx="416.84" cy="661.7" r="3.6" fill="#2563eb" stroke="#fff" stroke-width="1"/><circle cx="523.56" cy="622.8" r="7.2" fill="rgba(99,204,140,0.25)"/><circle cx="523.56" cy="622.8" r="3.6" fill="#6bd093" stroke="#fff" stroke-width="1"/><circle cx="523.56" cy="640.8" r="7.2" fill="rgba(37,99,235,0.25)"/><circle cx="523.56" cy="640.8" r="3.6" fill="#2563eb" stroke="#fff" stroke-width="1"/><circle cx="630.28" cy="563.3" r="7.2" fill="rgba(99,204,140,0.25)"/><circle cx="630.28" cy="563.3" r="3.6" fill="#6bd093" stroke="#fff" stroke-width="1"/><circle cx="630.28" cy="581.4" r="7.2" fill="rgba(37,99,235,0.25)"/><circle cx="630.28" cy="581.4" r="3.6" fill="#2563eb" stroke="#fff" stroke-width="1"/><circle cx="737.00" cy="564.4" r="7.2" fill="rgba(99,204,140,0.25)"/><circle cx="737.00" cy="564.4" r="3.6" fill="#6bd093" stroke="#fff" stroke-width="1"/><circle cx="737.00" cy="582.2" r="7.2" fill="rgba(37,99,235,0.25)"/><circle cx="737.00" cy="582.2" r="3.6" fill="#2563eb" stroke="#fff" stroke-width="1"/><circle cx="843.72" cy="599.2" r="7.2" fill="rgba(99,204,140,0.25)"/><circle cx="843.72" cy="599.2" r="3.6" fill="#6bd093" stroke="#fff" stroke-width="1"/><circle cx="843.72" cy="617.5" r="7.2" fill="rgba(37,99,235,0.25)"/><circle cx="843.72" cy="617.5" r="3.6" fill="#2563eb" stroke="#fff" stroke-width="1"/><circle cx="950.44" cy="607.8" r="7.2" fill="rgba(99,204,140,0.25)"/><circle cx="950.44" cy="607.8" r="3.6" fill="#6bd093" stroke="#fff" stroke-width="1"/><circle cx="950.44" cy="625.8" r="7.2" fill="rgba(37,99,235,0.25)"/><circle cx="950.44" cy="625.8" r="3.6" fill="#2563eb" stroke="#fff" stroke-width="1"/><circle cx="1057.16" cy="628.6" r="7.2" fill="rgba(99,204,140,0.25)"/><circle cx="1057.16" cy="628.6" r="3.6" fill="#6bd093" stroke="#fff" stroke-width="1"/><circle cx="1057.16" cy="646.4" r="7.2" fill="rgba(37,99,235,0.25)"/><circle cx="1057.16" cy="646.4" r="3.6" fill="#2563eb" stroke="#fff" stroke-width="1"/><circle cx="1163.88" cy="636.4" r="7.2" fill="rgba(99,204,140,0.25)"/><circle cx="1163.88" cy="636.4" r="3.6" fill="#6bd093" stroke="#fff" stroke-width="1"/><circle cx="1163.88" cy="654.2" r="7.2" fill="rgba(37,99,235,0.25)"/><circle cx="1163.88" cy="654.2" r="3.6" fill="#2563eb" stroke="#fff" stroke-width="1"/><circle cx="1270.60" cy="630.4" r="7.2" fill="rgba(99,204,140,0.25)"/><circle cx="1270.60" cy="630.4" r="3.6" fill="#6bd093" stroke="#fff" stroke-width="1"/><circle cx="1270.60" cy="648.4" r="7.2" fill="rgba(37,99,235,0.25)"/><circle cx="1270.60" cy="648.4" r="3.6" fill="#2563eb" stroke="#fff" stroke-width="1"/><circle cx="1377.32" cy="627.1" r="7.2" fill="rgba(99,204,140,0.25)"/><circle cx="1377.32" cy="627.1" r="3.6" fill="#6bd093" stroke="#fff" stroke-width="1"/><circle cx="1377.32" cy="645.1" r="7.2" fill="rgba(37,99,235,0.25)"/><circle cx="1377.32" cy="645.1" r="3.6" fill="#2563eb" stroke="#fff" stroke-width="1"/></g></svg>
<div class="t" style="left:140.60px;top:848.79px;font-size:13px;color:#1f2937;font-weight:700;letter-spacing:0.3px;-webkit-text-stroke:0.25px #ffffff;">$400</div>
<div class="t" style="left:140.60px;top:922.59px;font-size:13px;color:#1f2937;font-weight:700;letter-spacing:0.3px;-webkit-text-stroke:0.25px #ffffff;">$200</div>
<div class="t" style="left:140.60px;top:994.99px;font-size:13px;color:#1f2937;font-weight:700;letter-spacing:0.3px;-webkit-text-stroke:0.25px #ffffff;">$0</div>
<div class="t" style="left:104.20px;width:200px;text-align:center;top:1023.74px;font-size:12px;color:#374151;font-weight:400;letter-spacing:0.1px;-webkit-text-stroke-width:0.2px;">Jan</div>
<div class="t" style="left:210.50px;width:200px;text-align:center;top:1023.74px;font-size:12px;color:#374151;font-weight:400;letter-spacing:0.1px;-webkit-text-stroke-width:0.2px;">Feb</div>
<div class="t" style="left:317.00px;width:200px;text-align:center;top:1023.74px;font-size:12px;color:#374151;font-weight:400;letter-spacing:0.1px;-webkit-text-stroke-width:0.2px;">Mar</div>
<div class="t" style="left:423.00px;width:200px;text-align:center;top:1023.74px;font-size:12px;color:#374151;font-weight:400;letter-spacing:0.1px;-webkit-text-stroke-width:0.2px;">Apr</div>
<div class="t" style="left:530.00px;width:200px;text-align:center;top:1023.74px;font-size:12px;color:#374151;font-weight:400;letter-spacing:0.1px;-webkit-text-stroke-width:0.2px;">May</div>
<div class="t" style="left:637.00px;width:200px;text-align:center;top:1023.74px;font-size:12px;color:#374151;font-weight:400;letter-spacing:0.1px;-webkit-text-stroke-width:0.2px;">Jun</div>
<div class="t" style="left:741.00px;width:200px;text-align:center;top:1023.74px;font-size:12px;color:#374151;font-weight:400;letter-spacing:0.1px;-webkit-text-stroke-width:0.2px;">Jul</div>
<div class="t" style="left:846.00px;width:200px;text-align:center;top:1023.74px;font-size:12px;color:#374151;font-weight:400;letter-spacing:0.1px;-webkit-text-stroke-width:0.2px;">Aug</div>
<div class="t" style="left:954.00px;width:200px;text-align:center;top:1023.74px;font-size:12px;color:#374151;font-weight:400;letter-spacing:0.1px;-webkit-text-stroke-width:0.2px;">Sep</div>
<div class="t" style="left:1060.00px;width:200px;text-align:center;top:1023.74px;font-size:12px;color:#374151;font-weight:400;letter-spacing:0.1px;-webkit-text-stroke-width:0.2px;">Oct</div>
<div class="t" style="left:1167.00px;width:200px;text-align:center;top:1023.74px;font-size:12px;color:#374151;font-weight:400;letter-spacing:0.1px;-webkit-text-stroke-width:0.2px;">Nov</div>
<div class="t" style="left:1275.00px;width:200px;text-align:center;top:1023.74px;font-size:12px;color:#374151;font-weight:400;letter-spacing:0.1px;-webkit-text-stroke-width:0.2px;">Dec</div>
<svg class="r" style="left:1196px;top:795.8px" width="16" height="16" viewBox="0 0 16 16"><path d="M0,8 L16,8" stroke="#2563eb" stroke-width="1.6"/><circle cx="8" cy="8" r="8" fill="rgba(37,99,235,0.22)"/><circle cx="8" cy="8" r="3.3" fill="#2563eb" stroke="#fff" stroke-width="0.8"/></svg>
<svg class="r" style="left:1310.9px;top:795.8px" width="16" height="16" viewBox="0 0 16 16"><path d="M0,8 L16,8" stroke="#63cc8c" stroke-width="1.6"/><circle cx="8" cy="8" r="8" fill="rgba(99,204,140,0.22)"/><circle cx="8" cy="8" r="3.3" fill="#6bd093" stroke="#fff" stroke-width="0.8"/></svg>
<div class="t" style="right:145.40px;top:797.64px;font-size:12px;color:#4b5563;font-weight:400;letter-spacing:0.25px;-webkit-text-stroke-width:0.2px;">Selected Year</div>
<div class="t" style="right:145.40px;top:813.24px;font-size:12px;color:#4b5563;font-weight:400;letter-spacing:0.4px;-webkit-text-stroke-width:0.2px;">$700</div>
<div class="t" style="right:56.20px;top:797.64px;font-size:12px;color:#4b5563;font-weight:400;letter-spacing:0.2px;-webkit-text-stroke-width:0.2px;">Last Year</div>
<div class="t" style="right:56.20px;top:813.24px;font-size:12px;color:#4b5563;font-weight:400;letter-spacing:0.4px;-webkit-text-stroke-width:0.2px;">$800</div>
<div class="r" style="left:120px;top:1074px;width:1293px;height:276px;background:#fff;border:1px solid #eef0f2;border-radius:9px;box-sizing:border-box;box-shadow:0 1px 2px rgba(16,24,40,0.03)"></div>
<div class="t" style="left:141.40px;top:1092.66px;font-size:18px;color:#1f2937;font-weight:700;letter-spacing:0.04px;-webkit-text-stroke:0.12px #ffffff;">Adjustments Trend &amp; Comparison with Last Year</div>
<svg class="r" style="left:0;top:0" width="1440" height="1436"><defs>
<linearGradient id="gb2" x1="0" y1="0" x2="0" y2="1"><stop offset="0" stop-color="rgb(60,128,212)" stop-opacity="0.85"/><stop offset="1" stop-color="rgb(60,128,212)" stop-opacity="0.32"/></linearGradient>
<linearGradient id="gg2" x1="0" y1="0" x2="0" y2="1"><stop offset="0" stop-color="rgb(60,190,110)" stop-opacity="0.45"/><stop offset="1" stop-color="rgb(60,190,110)" stop-opacity="0.2"/></linearGradient>
</defs>
<g transform="translate(0,592)">
<path d="M203.40,617.40C238.97,619.22,274.55,618.65,310.12,627.70C345.69,636.75,381.27,643.14,416.84,643.90C452.41,644.66,487.99,643.94,523.56,622.80C559.13,601.66,594.71,568.79,630.28,563.30C665.85,557.81,701.43,557.08,737.00,564.40C772.57,571.72,808.15,592.17,843.72,599.20C879.29,606.23,914.87,606.19,950.44,607.80C986.01,609.41,1021.59,620.57,1057.16,628.60C1092.73,636.63,1128.31,636.65,1163.88,636.40C1199.45,636.15,1235.03,634.10,1270.60,630.40C1306.17,626.70,1341.75,628.42,1377.32,627.10L1377.32,645.10C1341.75,646.42,1306.17,644.70,1270.60,648.40C1235.03,652.10,1199.45,653.95,1163.88,654.20C1128.31,654.45,1092.73,654.43,1057.16,646.40C1021.59,638.37,986.01,627.41,950.44,625.80C914.87,624.19,879.29,624.53,843.72,617.50C808.15,610.47,772.57,589.52,737.00,582.20C701.43,574.88,665.85,575.91,630.28,581.40C594.71,586.89,559.13,619.66,523.56,640.80C487.99,661.94,452.41,662.46,416.84,661.70C381.27,660.94,345.69,654.65,310.12,645.60C274.55,636.55,238.97,637.32,203.40,635.50Z" fill="url(#gg2)"/>
<path d="M203.40,635.50C238.97,637.32,274.55,636.55,310.12,645.60C345.69,654.65,381.27,660.94,416.84,661.70C452.41,662.46,487.99,661.94,523.56,640.80C559.13,619.66,594.71,586.89,630.28,581.40C665.85,575.91,701.43,574.88,737.00,582.20C772.57,589.52,808.15,610.47,843.72,617.50C879.29,624.53,914.87,624.19,950.44,625.80C986.01,627.41,1021.59,638.37,1057.16,646.40C1092.73,654.43,1128.31,654.45,1163.88,654.20C1199.45,653.95,1235.03,652.10,1270.60,648.40C1306.17,644.70,1341.75,646.42,1377.32,645.10L1377.32,709.3L203.40,709.3Z" fill="url(#gb2)"/>
<path d="M183,559.5 L1383,559.5 M183,633.5 L1383,633.5" stroke="#a8a8a8" stroke-width="1" stroke-dasharray="2.5 1.5"/>
<path d="M181,709.3 L1385,709.3" stroke="#111" stroke-width="1.3"/>
<path d="M203.40,617.40C238.97,619.22,274.55,618.65,310.12,627.70C345.69,636.75,381.27,643.14,416.84,643.90C452.41,644.66,487.99,643.94,523.56,622.80C559.13,601.66,594.71,568.79,630.28,563.30C665.85,557.81,701.43,557.08,737.00,564.40C772.57,571.72,808.15,592.17,843.72,599.20C879.29,606.23,914.87,606.19,950.44,607.80C986.01,609.41,1021.59,620.57,1057.16,628.60C1092.73,636.63,1128.31,636.65,1163.88,636.40C1199.45,636.15,1235.03,634.10,1270.60,630.40C1306.17,626.70,1341.75,628.42,1377.32,627.10" fill="none" stroke="#63cc8c" stroke-width="1.2"/>
<path d="M203.40,635.50C238.97,637.32,274.55,636.55,310.12,645.60C345.69,654.65,381.27,660.94,416.84,661.70C452.41,662.46,487.99,661.94,523.56,640.80C559.13,619.66,594.71,586.89,630.28,581.40C665.85,575.91,701.43,574.88,737.00,582.20C772.57,589.52,808.15,610.47,843.72,617.50C879.29,624.53,914.87,624.19,950.44,625.80C986.01,627.41,1021.59,638.37,1057.16,646.40C1092.73,654.43,1128.31,654.45,1163.88,654.20C1199.45,653.95,1235.03,652.10,1270.60,648.40C1306.17,644.70,1341.75,646.42,1377.32,645.10" fill="none" stroke="#2563eb" stroke-width="1.3"/>
<circle cx="203.40" cy="617.4" r="7.2" fill="rgba(99,204,140,0.25)"/><circle cx="203.40" cy="617.4" r="3.6" fill="#6bd093" stroke="#fff" stroke-width="1"/><circle cx="203.40" cy="635.5" r="7.2" fill="rgba(37,99,235,0.25)"/><circle cx="203.40" cy="635.5" r="3.6" fill="#2563eb" stroke="#fff" stroke-width="1"/><circle cx="310.12" cy="627.7" r="7.2" fill="rgba(99,204,140,0.25)"/><circle cx="310.12" cy="627.7" r="3.6" fill="#6bd093" stroke="#fff" stroke-width="1"/><circle cx="310.12" cy="645.6" r="7.2" fill="rgba(37,99,235,0.25)"/><circle cx="310.12" cy="645.6" r="3.6" fill="#2563eb" stroke="#fff" stroke-width="1"/><circle cx="416.84" cy="643.9" r="7.2" fill="rgba(99,204,140,0.25)"/><circle cx="416.84" cy="643.9" r="3.6" fill="#6bd093" stroke="#fff" stroke-width="1"/><circle cx="416.84" cy="661.7" r="7.2" fill="rgba(37,99,235,0.25)"/><circle cx="416.84" cy="661.7" r="3.6" fill="#2563eb" stroke="#fff" stroke-width="1"/><circle cx="523.56" cy="622.8" r="7.2" fill="rgba(99,204,140,0.25)"/><circle cx="523.56" cy="622.8" r="3.6" fill="#6bd093" stroke="#fff" stroke-width="1"/><circle cx="523.56" cy="640.8" r="7.2" fill="rgba(37,99,235,0.25)"/><circle cx="523.56" cy="640.8" r="3.6" fill="#2563eb" stroke="#fff" stroke-width="1"/><circle cx="630.28" cy="563.3" r="7.2" fill="rgba(99,204,140,0.25)"/><circle cx="630.28" cy="563.3" r="3.6" fill="#6bd093" stroke="#fff" stroke-width="1"/><circle cx="630.28" cy="581.4" r="7.2" fill="rgba(37,99,235,0.25)"/><circle cx="630.28" cy="581.4" r="3.6" fill="#2563eb" stroke="#fff" stroke-width="1"/><circle cx="737.00" cy="564.4" r="7.2" fill="rgba(99,204,140,0.25)"/><circle cx="737.00" cy="564.4" r="3.6" fill="#6bd093" stroke="#fff" stroke-width="1"/><circle cx="737.00" cy="582.2" r="7.2" fill="rgba(37,99,235,0.25)"/><circle cx="737.00" cy="582.2" r="3.6" fill="#2563eb" stroke="#fff" stroke-width="1"/><circle cx="843.72" cy="599.2" r="7.2" fill="rgba(99,204,140,0.25)"/><circle cx="843.72" cy="599.2" r="3.6" fill="#6bd093" stroke="#fff" stroke-width="1"/><circle cx="843.72" cy="617.5" r="7.2" fill="rgba(37,99,235,0.25)"/><circle cx="843.72" cy="617.5" r="3.6" fill="#2563eb" stroke="#fff" stroke-width="1"/><circle cx="950.44" cy="607.8" r="7.2" fill="rgba(99,204,140,0.25)"/><circle cx="950.44" cy="607.8" r="3.6" fill="#6bd093" stroke="#fff" stroke-width="1"/><circle cx="950.44" cy="625.8" r="7.2" fill="rgba(37,99,235,0.25)"/><circle cx="950.44" cy="625.8" r="3.6" fill="#2563eb" stroke="#fff" stroke-width="1"/><circle cx="1057.16" cy="628.6" r="7.2" fill="rgba(99,204,140,0.25)"/><circle cx="1057.16" cy="628.6" r="3.6" fill="#6bd093" stroke="#fff" stroke-width="1"/><circle cx="1057.16" cy="646.4" r="7.2" fill="rgba(37,99,235,0.25)"/><circle cx="1057.16" cy="646.4" r="3.6" fill="#2563eb" stroke="#fff" stroke-width="1"/><circle cx="1163.88" cy="636.4" r="7.2" fill="rgba(99,204,140,0.25)"/><circle cx="1163.88" cy="636.4" r="3.6" fill="#6bd093" stroke="#fff" stroke-width="1"/><circle cx="1163.88" cy="654.2" r="7.2" fill="rgba(37,99,235,0.25)"/><circle cx="1163.88" cy="654.2" r="3.6" fill="#2563eb" stroke="#fff" stroke-width="1"/><circle cx="1270.60" cy="630.4" r="7.2" fill="rgba(99,204,140,0.25)"/><circle cx="1270.60" cy="630.4" r="3.6" fill="#6bd093" stroke="#fff" stroke-width="1"/><circle cx="1270.60" cy="648.4" r="7.2" fill="rgba(37,99,235,0.25)"/><circle cx="1270.60" cy="648.4" r="3.6" fill="#2563eb" stroke="#fff" stroke-width="1"/><circle cx="1377.32" cy="627.1" r="7.2" fill="rgba(99,204,140,0.25)"/><circle cx="1377.32" cy="627.1" r="3.6" fill="#6bd093" stroke="#fff" stroke-width="1"/><circle cx="1377.32" cy="645.1" r="7.2" fill="rgba(37,99,235,0.25)"/><circle cx="1377.32" cy="645.1" r="3.6" fill="#2563eb" stroke="#fff" stroke-width="1"/></g></svg>
<div class="t" style="left:140.60px;top:1144.79px;font-size:13px;color:#1f2937;font-weight:700;letter-spacing:0.3px;-webkit-text-stroke:0.25px #ffffff;">$400</div>
<div class="t" style="left:140.60px;top:1218.59px;font-size:13px;color:#1f2937;font-weight:700;letter-spacing:0.3px;-webkit-text-stroke:0.25px #ffffff;">$200</div>
<div class="t" style="left:140.60px;top:1290.99px;font-size:13px;color:#1f2937;font-weight:700;letter-spacing:0.3px;-webkit-text-stroke:0.25px #ffffff;">$0</div>
<div class="t" style="left:104.20px;width:200px;text-align:center;top:1319.74px;font-size:12px;color:#374151;font-weight:400;letter-spacing:0.1px;-webkit-text-stroke-width:0.2px;">Jan</div>
<div class="t" style="left:210.50px;width:200px;text-align:center;top:1319.74px;font-size:12px;color:#374151;font-weight:400;letter-spacing:0.1px;-webkit-text-stroke-width:0.2px;">Feb</div>
<div class="t" style="left:317.00px;width:200px;text-align:center;top:1319.74px;font-size:12px;color:#374151;font-weight:400;letter-spacing:0.1px;-webkit-text-stroke-width:0.2px;">Mar</div>
<div class="t" style="left:423.00px;width:200px;text-align:center;top:1319.74px;font-size:12px;color:#374151;font-weight:400;letter-spacing:0.1px;-webkit-text-stroke-width:0.2px;">Apr</div>
<div class="t" style="left:530.00px;width:200px;text-align:center;top:1319.74px;font-size:12px;color:#374151;font-weight:400;letter-spacing:0.1px;-webkit-text-stroke-width:0.2px;">May</div>
<div class="t" style="left:637.00px;width:200px;text-align:center;top:1319.74px;font-size:12px;color:#374151;font-weight:400;letter-spacing:0.1px;-webkit-text-stroke-width:0.2px;">Jun</div>
<div class="t" style="left:741.00px;width:200px;text-align:center;top:1319.74px;font-size:12px;color:#374151;font-weight:400;letter-spacing:0.1px;-webkit-text-stroke-width:0.2px;">Jul</div>
<div class="t" style="left:846.00px;width:200px;text-align:center;top:1319.74px;font-size:12px;color:#374151;font-weight:400;letter-spacing:0.1px;-webkit-text-stroke-width:0.2px;">Aug</div>
<div class="t" style="left:954.00px;width:200px;text-align:center;top:1319.74px;font-size:12px;color:#374151;font-weight:400;letter-spacing:0.1px;-webkit-text-stroke-width:0.2px;">Sep</div>
<div class="t" style="left:1060.00px;width:200px;text-align:center;top:1319.74px;font-size:12px;color:#374151;font-weight:400;letter-spacing:0.1px;-webkit-text-stroke-width:0.2px;">Oct</div>
<div class="t" style="left:1167.00px;width:200px;text-align:center;top:1319.74px;font-size:12px;color:#374151;font-weight:400;letter-spacing:0.1px;-webkit-text-stroke-width:0.2px;">Nov</div>
<div class="t" style="left:1275.00px;width:200px;text-align:center;top:1319.74px;font-size:12px;color:#374151;font-weight:400;letter-spacing:0.1px;-webkit-text-stroke-width:0.2px;">Dec</div>
<svg class="r" style="left:1196px;top:1091.8px" width="16" height="16" viewBox="0 0 16 16"><path d="M0,8 L16,8" stroke="#2563eb" stroke-width="1.6"/><circle cx="8" cy="8" r="8" fill="rgba(37,99,235,0.22)"/><circle cx="8" cy="8" r="3.3" fill="#2563eb" stroke="#fff" stroke-width="0.8"/></svg>
<svg class="r" style="left:1310.9px;top:1091.8px" width="16" height="16" viewBox="0 0 16 16"><path d="M0,8 L16,8" stroke="#63cc8c" stroke-width="1.6"/><circle cx="8" cy="8" r="8" fill="rgba(99,204,140,0.22)"/><circle cx="8" cy="8" r="3.3" fill="#6bd093" stroke="#fff" stroke-width="0.8"/></svg>
<div class="t" style="right:145.40px;top:1093.64px;font-size:12px;color:#4b5563;font-weight:400;letter-spacing:0.25px;-webkit-text-stroke-width:0.2px;">Selected Year</div>
<div class="t" style="right:145.40px;top:1109.24px;font-size:12px;color:#4b5563;font-weight:400;letter-spacing:0.4px;-webkit-text-stroke-width:0.2px;">$700</div>
<div class="t" style="right:56.20px;top:1093.64px;font-size:12px;color:#4b5563;font-weight:400;letter-spacing:0.2px;-webkit-text-stroke-width:0.2px;">Last Year</div>
<div class="t" style="right:56.20px;top:1109.24px;font-size:12px;color:#4b5563;font-weight:400;letter-spacing:0.4px;-webkit-text-stroke-width:0.2px;">$800</div>
<div class="r" style="left:21px;top:209px;width:49px;height:44px;background:#dbeafe;border-radius:9px"></div>
<svg class="r" style="left:0;top:0" width="91" height="1000">
<path d="M34.9,224 L34.9,237.2 Q34.9,240.6 38.3,240.6 L54.8,240.6" fill="none" stroke="#1d5fe0" stroke-width="3" stroke-linecap="round" stroke-linejoin="round"/>
<path d="M39.4,233.6 L44.2,228.6 L47.8,232.4 L53.6,226.6" fill="none" stroke="#1d5fe0" stroke-width="3" stroke-linecap="round" stroke-linejoin="round"/>

<rect x="35" y="300.7" width="21" height="21.4" rx="2.2" fill="#334155"/>
<path d="M41.6,301.5 Q42.5,298 45.3,298 Q48.1,298 49,301.5 Z" fill="#334155"/>
<circle cx="45.3" cy="301.2" r="1" fill="#eff6ff"/>
<path d="M39.4,311.4 L43.6,315.4 L51.4,307.2" fill="none" stroke="#eff6ff" stroke-width="2.5" stroke-linecap="square"/>

<path d="M38.3,372.8 L39.8,374.5 L41.3,372.8 L42.8,374.5 L44.3,372.8 L45.8,374.5 L47.3,372.8 L48.8,374.5 L50.3,372.8 L51.8,374.5 L53.3,372.8 L54.8,374.5 L55.7,372.8 L55.7,393.5 Q55.7,395.7 53.5,395.7 L37.5,395.7 Q35.3,395.7 35.3,393.5 L35.3,388.4 L38.3,388.4 Z" fill="#334155"/>
<path d="M40.3,376.3 L53.7,376.3 L53.7,392 Q53.7,393.2 52.6,393.2 Q51.5,393.2 51.5,392 L51.5,388.3 L40.3,388.3 Z" fill="#eff6ff"/>
<rect x="42" y="379" width="5.8" height="1.6" fill="#334155"/><rect x="42" y="382.3" width="5.8" height="1.6" fill="#334155"/>
<rect x="49.6" y="379" width="1.8" height="1.6" fill="#334155"/><rect x="49.6" y="382.3" width="1.8" height="1.6" fill="#334155"/>

<path d="M38.5,445.4 L48.2,445.4 L54,451.6 L54,456.6 L46.2,464.6 L46.2,468.5 L38.5,468.5 Q37,468.5 37,467 L37,446.9 Q37,445.4 38.5,445.4 Z" fill="#334155"/>
<path d="M47.2,447.6 L47.2,452.4 L51.8,452.4 Z" fill="#eff6ff"/>
<path d="M48.6,468.5 L48.6,464.3 L55.4,457.5 L58.4,460.5 L51.6,468.5 Z" fill="#334155" stroke="#334155" stroke-width="1" stroke-linejoin="round"/>
<circle cx="55.6" cy="460.6" r="0.9" fill="#eff6ff"/>

<rect x="35" y="519.1" width="20.8" height="21.5" rx="2.2" fill="#334155"/>
<path d="M41.6,520 Q42.5,516.6 45.4,516.6 Q48.3,516.6 49.2,520 Z" fill="#334155"/>
<circle cx="45.4" cy="519.6" r="1" fill="#eff6ff"/>
<path d="M45.4,525.4 L41.3,529.7 L45.4,534 M41.8,529.7 L50.3,529.7" fill="none" stroke="#eff6ff" stroke-width="2.4" stroke-linecap="square" stroke-linejoin="miter"/>

<rect x="37" y="594" width="21.5" height="12.8" rx="2" fill="#334155"/>
<circle cx="47.7" cy="600.4" r="3.4" fill="#eff6ff"/>
<path d="M38.9,596 L41,596 L38.9,598.1 Z M56.6,596 L54.5,596 L56.6,598.1 Z M38.9,604.8 L41,604.8 L38.9,602.7 Z M56.6,604.8 L54.5,604.8 L56.6,602.7 Z" fill="#eff6ff"/>
<path d="M33.5,597.6 L33.5,608.5 Q33.5,610.4 35.4,610.4 L54.6,610.4" fill="none" stroke="#334155" stroke-width="2.3" stroke-linecap="round"/>

<rect x="40" y="663.8" width="1.9" height="4" fill="#334155"/><rect x="49.1" y="663.8" width="1.9" height="4" fill="#334155"/>
<path d="M35.4,668.8 Q35.4,666.7 37.5,666.7 L53.2,666.7 Q55.3,666.7 55.3,668.8 L55.3,673.9 L35.4,673.9 Z" fill="#334155"/>
<path d="M36.5,673 L36.5,685 Q36.5,686.1 37.6,686.1 L45.8,686.1 M54.2,673 L54.2,676" fill="none" stroke="#334155" stroke-width="2.3"/>
<path d="M49.6,681.2 A4.7,4.7 0 1 1 49.3,686.6" fill="none" stroke="#334155" stroke-width="1.9"/>
<path d="M48.3,677.8 L48.3,682.6 L53,682.6 Z" fill="#334155"/>

<circle cx="42.5" cy="744" r="4.4" fill="#334155"/>
<path d="M33.9,757 L33.9,755 Q33.9,749.6 39.3,749.6 L45.5,749.6 Q47.6,749.6 48.6,751 Q46.2,752.5 46.2,757 Z" fill="#334155"/>
<circle cx="52" cy="748" r="3" fill="#334155"/>
<path d="M47.2,757 Q47.2,752 51,752 L53.2,752 Q57,752 57,757 Z" fill="#334155"/>

<rect x="40" y="807.8" width="1.8" height="4" fill="#334155"/><rect x="49.1" y="807.8" width="1.8" height="4" fill="#334155"/>
<rect x="36.2" y="810.5" width="18.4" height="18" rx="2.2" fill="#334155"/>
<rect x="38.5" y="815.4" width="13.8" height="10.9" fill="#eff6ff"/>
<rect x="40.4" y="818.8" width="9.6" height="1.6" fill="#334155"/><rect x="40.4" y="822.6" width="6.4" height="1.6" fill="#334155"/>

<circle cx="43.3" cy="882" r="4" fill="#334155"/>
<path d="M35,894.7 L35,893 Q35,888.4 39.6,888.4 L45.2,888.4 Q44,890.5 44,892.5 Q44,894 45,894.7 Z" fill="#334155"/>
<g transform="translate(50.1,890.4)"><path d="M-1.2,-5.4 L1.2,-5.4 L1.6,-3.8 L3.1,-3 L4.5,-3.8 L5.5,-1.8 L4.3,-0.6 L4.3,0.6 L5.5,1.8 L4.5,3.8 L3.1,3 L1.6,3.8 L1.2,5.4 L-1.2,5.4 L-1.6,3.8 L-3.1,3 L-4.5,3.8 L-5.5,1.8 L-4.3,0.6 L-4.3,-0.6 L-5.5,-1.8 L-4.5,-3.8 L-3.1,-3 L-1.6,-3.8 Z" fill="#334155"/><circle r="1.9" fill="#eff6ff"/></g>
</svg>
</body></html>
